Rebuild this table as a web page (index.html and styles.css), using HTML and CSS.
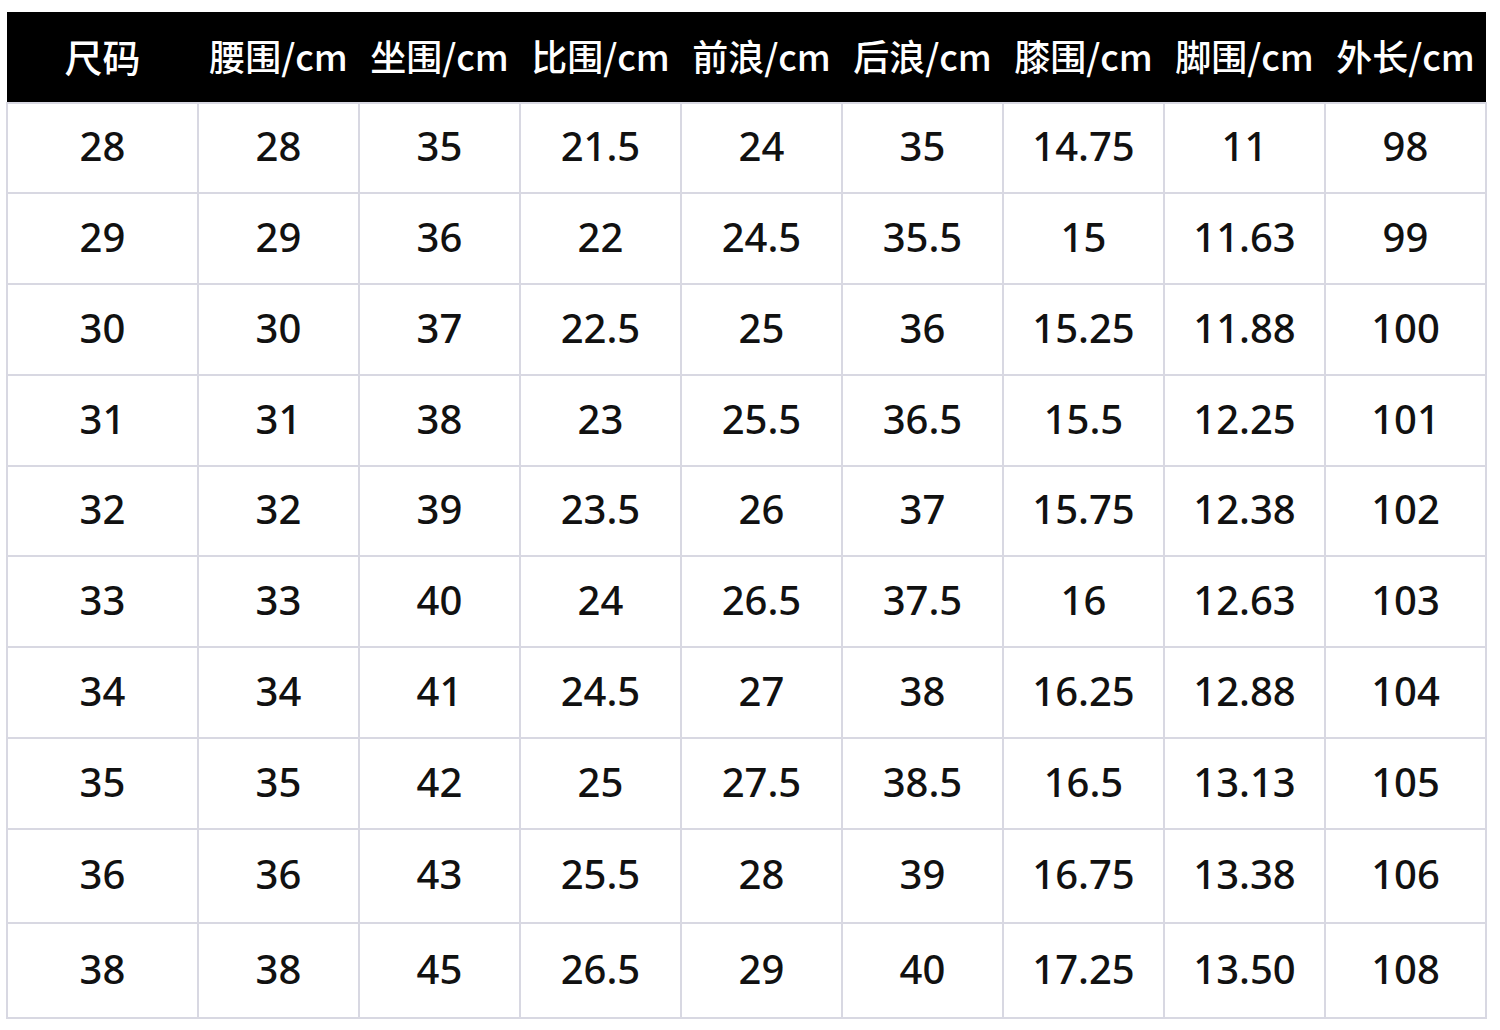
FILE: index.html
```html
<!DOCTYPE html>
<html lang="zh">
<head>
<meta charset="utf-8">
<title>尺码表</title>
<link rel="stylesheet" href="styles.css">
</head>
<body>
<table class="size-table">
  <thead>
    <tr>
      <th class="c-first">尺码</th>
      <th>腰围/cm</th>
      <th>坐围/cm</th>
      <th>比围/cm</th>
      <th>前浪/cm</th>
      <th>后浪/cm</th>
      <th>膝围/cm</th>
      <th>脚围/cm</th>
      <th>外长/cm</th>
    </tr>
  </thead>
  <tbody>
    <tr class="r90"><td>28</td><td>28</td><td>35</td><td>21.5</td><td>24</td><td>35</td><td>14.75</td><td>11</td><td>98</td></tr>
    <tr><td>29</td><td>29</td><td>36</td><td>22</td><td>24.5</td><td>35.5</td><td>15</td><td>11.63</td><td>99</td></tr>
    <tr><td>30</td><td>30</td><td>37</td><td>22.5</td><td>25</td><td>36</td><td>15.25</td><td>11.88</td><td>100</td></tr>
    <tr><td>31</td><td>31</td><td>38</td><td>23</td><td>25.5</td><td>36.5</td><td>15.5</td><td>12.25</td><td>101</td></tr>
    <tr class="r90"><td>32</td><td>32</td><td>39</td><td>23.5</td><td>26</td><td>37</td><td>15.75</td><td>12.38</td><td>102</td></tr>
    <tr><td>33</td><td>33</td><td>40</td><td>24</td><td>26.5</td><td>37.5</td><td>16</td><td>12.63</td><td>103</td></tr>
    <tr><td>34</td><td>34</td><td>41</td><td>24.5</td><td>27</td><td>38</td><td>16.25</td><td>12.88</td><td>104</td></tr>
    <tr><td>35</td><td>35</td><td>42</td><td>25</td><td>27.5</td><td>38.5</td><td>16.5</td><td>13.13</td><td>105</td></tr>
    <tr class="r94"><td>36</td><td>36</td><td>43</td><td>25.5</td><td>28</td><td>39</td><td>16.75</td><td>13.38</td><td>106</td></tr>
    <tr class="r95"><td>38</td><td>38</td><td>45</td><td>26.5</td><td>29</td><td>40</td><td>17.25</td><td>13.50</td><td>108</td></tr>
  </tbody>
</table>
</body>
</html>
```

FILE: styles.css
```css
html, body {
  margin: 0;
  padding: 0;
  background: #ffffff;
}

body {
  padding: 12px 0 0 6px;
}

.size-table {
  border-collapse: collapse;
  table-layout: fixed;
  width: 1481px;
  font-family: "Noto Sans", "Noto Sans CJK SC", sans-serif;
  color: #111111;
}

.size-table th {
  background: #000000;
  color: #ffffff;
  height: 91px;
  box-sizing: border-box;
  padding: 0 0 4px 0;
  font-family: "Noto Sans CJK SC", "Noto Sans", sans-serif;
  font-size: 36px;
  font-weight: 500;
  text-align: center;
  vertical-align: middle;
  width: 161px;
  white-space: nowrap;
  border: none;
}

.size-table th.c-first {
  width: 191px;
  font-size: 38px;
}

.size-table td {
  height: 91px;
  padding: 0 0 5px 0;
  text-align: center;
  vertical-align: middle;
  font-size: 40px;
  font-weight: 500;
  border: 2px solid #d8d8e2;
  box-sizing: border-box;
}

.size-table tr.r90 td { height: 90px; }
.size-table tr.r94 td { height: 94px; }
.size-table tr.r95 td { height: 95px; }
```
